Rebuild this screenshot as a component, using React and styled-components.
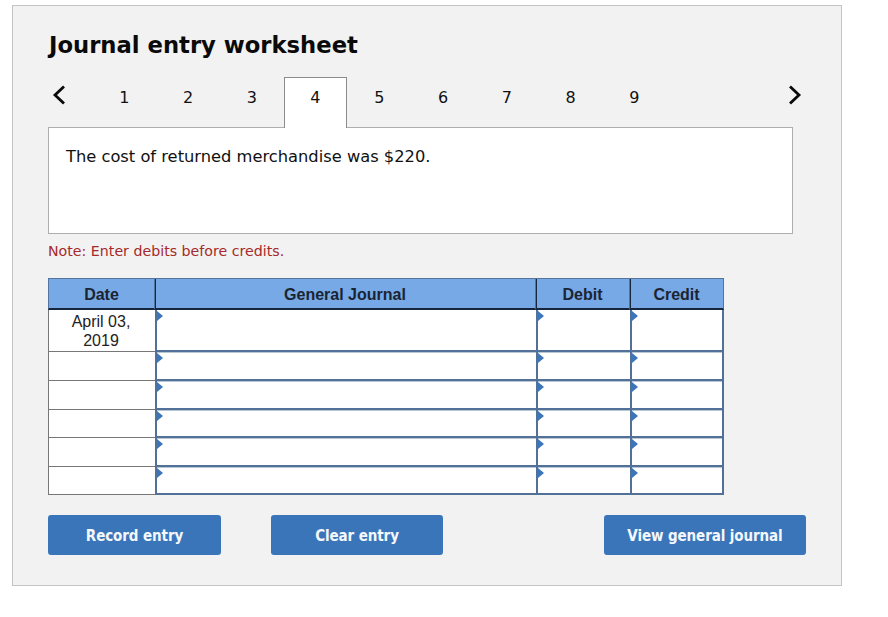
import React from 'react'
import styled, { createGlobalStyle } from 'styled-components'

const GlobalStyle = createGlobalStyle`
  html, body {
    margin: 0;
    background: #fff;
  }
`

const Panel = styled.div`
  box-sizing: border-box;
  width: 830px;
  height: 581px;
  margin: 5px 0 0 12px;
  padding: 24px 35px 0;
  background: #f2f2f2;
  border: 1px solid #c4c4c4;
  font-family: "DejaVu Sans", sans-serif;
  color: #111;
`

const Title = styled.h1`
  margin: 0;
  height: 47px;
  padding-left: 1px;
  font-size: 22.7px;
  line-height: 30px;
  font-weight: bold;
  color: #0a0a0a;
`

const TabRow = styled.div`
  display: flex;
  align-items: flex-start;
  height: 50px;
`

const Arrow = styled.button`
  display: flex;
  width: 44.5px;
  height: 50px;
  padding: 8px 0 0 4px;
  border: 0;
  background: none;
  margin-left: ${p => (p.$right ? 'auto' : '0')};
  justify-content: ${p => (p.$right ? 'flex-end' : 'flex-start')};
  padding-right: ${p => (p.$right ? '4px' : '0')};
  svg { display: block; }
`

const Tab = styled.div`
  position: relative;
  z-index: 1;
  box-sizing: border-box;
  width: ${p => (p.$active ? '63.25px' : '63.75px')};
  margin-right: ${p => (p.$active ? '0.5px' : '0')};
  height: 51px;
  padding-top: 9px;
  text-align: center;
  font-size: 16px;
  line-height: 22px;
  border: 1px solid ${p => (p.$active ? '#8c8c8c' : 'transparent')};
  border-bottom: 0;
  background: ${p => (p.$active ? '#fff' : 'transparent')};
`

const Question = styled.div`
  box-sizing: border-box;
  width: 745px;
  height: 107px;
  padding: 18px 17px;
  background: #fff;
  border: 1px solid #aeaeae;
  font-size: 16.3px;
  line-height: 22px;
`

const Note = styled.div`
  margin-top: 9px;
  height: 35px;
  font-size: 14.2px;
  line-height: 17px;
  color: #a52a2a;
`

const Journal = styled.div`
  display: grid;
  grid-template-columns: 107px 381px 94px 94px;
  grid-template-rows: 32px 42px 29px 29px 28px 29px 28px;
  width: 676px;
  font-family: "Liberation Sans", Arial, sans-serif;
`

const HeadCell = styled.div`
  box-sizing: border-box;
  display: flex;
  align-items: center;
  justify-content: center;
  padding-top: 2px;
  background: #76a9e5;
  border: 1px solid #55749b;
  border-left-width: ${p => (p.$first ? '1px' : '0')};
  border-bottom: 2px solid #16263d;
  box-shadow: ${p => (p.$first ? 'none' : 'inset 1px 0 0 #16263d')};
  font-size: 16px;
  font-weight: bold;
  color: #1b2433;
`

const DateCell = styled.div`
  box-sizing: border-box;
  padding: 2px 16px 0 14px;
  background: #fff;
  border: 1px solid #777;
  border-top: 0;
  border-right: 0;
  text-align: center;
  font-size: 16px;
  line-height: 19px;
  color: #222;
`

const EntryCell = styled.div`
  position: relative;
  box-sizing: border-box;
  background: #fff;
  border: 2px solid #517199;
  border-top: 0;
  border-right-width: ${p => (p.$last ? '2px' : '0')};
  box-shadow: ${p => (p.$top ? 'none' : 'inset 0 1px 0 rgba(81, 113, 153, 0.4)')};
  &::before {
    content: '';
    position: absolute;
    top: 1px;
    left: 0;
    border-style: solid;
    border-width: 5px 0 5px 6px;
    border-color: transparent transparent transparent #3b76ba;
  }
`

const Footer = styled.div`
  display: flex;
  margin-top: 20px;
`

const ActionButton = styled.button`
  box-sizing: border-box;
  width: ${p => p.$width}px;
  height: 40px;
  margin-left: ${p => (p.$push ? 'auto' : `${p.$gap || 0}px`)};
  padding: 2px 0 0;
  border: 0;
  border-radius: 3px;
  background: #3a75ba;
  color: #f4f8fc;
  font-family: "DejaVu Sans Condensed", "DejaVu Sans", sans-serif;
  font-stretch: condensed;
  font-size: 15px;
  letter-spacing: -0.1px;
  font-weight: bold;
`

const rows = [
  'April 03, 2019',
  '',
  '',
  '',
  '',
  ''
]

const Chevron = ({ right }) => (
  <svg width='14' height='20' viewBox='0 0 14 20' fill='none' stroke='#0a0a0a' strokeWidth='2.8'>
    <polyline points={right ? '2,1.5 11,10 2,18.5' : '12,1.5 3,10 12,18.5'} />
  </svg>
)

const App = () => (
  <>
    <GlobalStyle />
    <Panel>
      <Title>Journal entry worksheet</Title>
      <TabRow>
        <Arrow aria-label='Previous'><Chevron /></Arrow>
        {[1, 2, 3, 4, 5, 6, 7, 8, 9].map(n => (
          <Tab key={n} $active={n === 4}>{n}</Tab>
        ))}
        <Arrow $right aria-label='Next'><Chevron right /></Arrow>
      </TabRow>
      <Question>The cost of returned merchandise was $220.</Question>
      <Note>Note: Enter debits before credits.</Note>
      <Journal>
        <HeadCell $first>Date</HeadCell>
        <HeadCell>General Journal</HeadCell>
        <HeadCell>Debit</HeadCell>
        <HeadCell>Credit</HeadCell>
        {rows.map((date, i) => (
          <React.Fragment key={i}>
            <DateCell>{date}</DateCell>
            <EntryCell $top={i === 0} />
            <EntryCell $top={i === 0} />
            <EntryCell $top={i === 0} $last />
          </React.Fragment>
        ))}
      </Journal>
      <Footer>
        <ActionButton $width={173}>Record entry</ActionButton>
        <ActionButton $width={172} $gap={50}>Clear entry</ActionButton>
        <ActionButton $width={202} $push>View general journal</ActionButton>
      </Footer>
    </Panel>
  </>
)

export default App
